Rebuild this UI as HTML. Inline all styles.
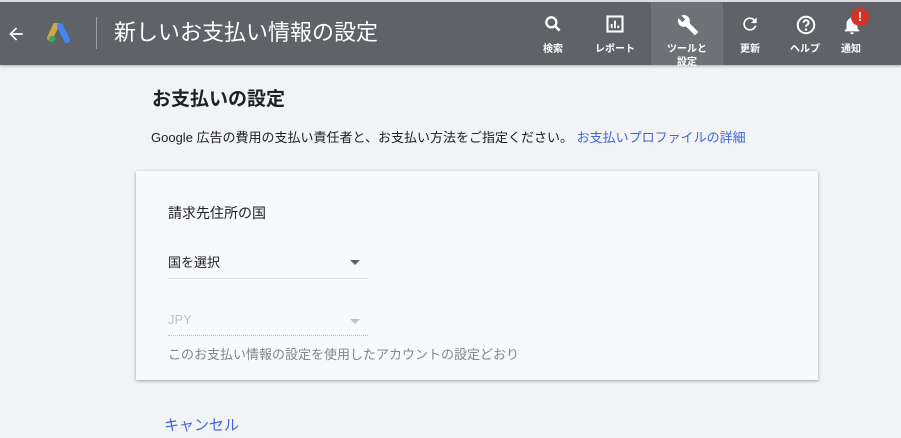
<!DOCTYPE html>
<html><head><meta charset="utf-8"><style>
*{margin:0;padding:0;box-sizing:border-box}
body{width:901px;height:438px;overflow:hidden;background:#f1f3f4;font-family:"Liberation Sans","Noto Sans CJK JP",sans-serif;position:relative}
.hdr{position:absolute;left:0;top:0;width:901px;height:65px;background:#5f6368;border-top:2px solid #dadce0;box-shadow:0 1px 3px rgba(0,0,0,.3)}
.ab{position:absolute;color:#fff}
.nav{position:absolute;top:0;height:63px;width:72px;text-align:center;color:#fff;font-size:10px;font-weight:bold}
.nav svg{position:absolute;left:26px;top:12px}
.nav span{position:absolute;left:0;right:0;top:41px;line-height:13px}
.abs{position:absolute}
</style></head><body>
<div class="hdr">
<svg class="abs" style="left:6px;top:22px" width="20" height="20" viewBox="0 0 24 24"><path d="M20 11H7.8l5.6-5.6L12 4l-8 8 8 8 1.4-1.4L7.8 13H20z" fill="#fff"/></svg>
<svg class="abs" style="left:47px;top:21px" width="25" height="22" viewBox="0 0 25 22"><path d="M9 2 L3 15" stroke="#f3b43f" stroke-width="6" stroke-linecap="round" opacity=".8"/><path d="M13 3 L20 17" stroke="#4285f4" stroke-width="6" stroke-linecap="round"/><circle cx="5" cy="16" r="3.3" fill="#34a853"/></svg>
<div class="abs" style="left:96px;top:15px;width:1px;height:32px;background:#9aa0a6"></div>
<div class="ab" style="left:114px;top:16px;font-size:22px;line-height:29px">新しいお支払い情報の設定</div>
<div class="nav" style="left:517px"><svg width="20" height="20" viewBox="0 0 24 24"><circle cx="10" cy="10" r="6" fill="none" stroke="#fff" stroke-width="2.8"/><path d="M14 14l6 6" stroke="#fff" stroke-width="3"/></svg><span>検索</span></div>
<div class="nav" style="left:579px"><svg width="20" height="20" viewBox="0 0 24 24"><rect x="3" y="3" width="18" height="18" fill="none" stroke="#fff" stroke-width="2.5"/><path d="M8 17v-5M12 17V8M16 17v-3" stroke="#fff" stroke-width="2.2"/></svg><span>レポート</span></div>
<div class="nav" style="left:651px;background:#6e7175;height:63px"><svg width="22" height="22" viewBox="0 0 24 24"><path d="M22.7 19l-9.1-9.1c.9-2.3.4-5-1.5-6.9-2-2-5-2.4-7.4-1.3L9 6 6 9 1.6 4.7C.4 7.1.9 10.1 2.9 12.1c1.9 1.9 4.6 2.4 6.9 1.5l9.1 9.1c.4.4 1 .4 1.4 0l2.3-2.3c.5-.4.5-1.100.1-1.4z" fill="#fff"/></svg><span>ツールと<br>設定</span></div>
<div class="nav" style="left:714px"><svg width="20" height="20" viewBox="0 0 24 24"><path d="M17.6 6.4A8 8 0 1 0 19.7 14h-2.1a6 6 0 1 1-1.4-6.2L13 11h7V4z" fill="#fff"/></svg><span>更新</span></div>
<div class="nav" style="left:769px"><svg width="22" height="22" viewBox="0 0 24 24"><circle cx="12" cy="12" r="9" fill="none" stroke="#fff" stroke-width="2.2"/><path d="M9.3 9.5a2.7 2.7 0 1 1 3.8 2.4c-.8.4-1.1 1-1.1 2" fill="none" stroke="#fff" stroke-width="2.2"/><circle cx="12" cy="17" r="1.3" fill="#fff"/></svg><span>ヘルプ</span></div>
<div class="nav" style="left:815px"><svg width="22" height="22" viewBox="0 0 24 24"><path d="M12 22a2 2 0 0 0 2-2h-4a2 2 0 0 0 2 2zm6-6v-5c0-3-1.6-5.6-4.5-6.3V4a1.5 1.5 0 0 0-3 0v.7C7.6 5.4 6 8 6 11v5l-2 2v1h16v-1z" fill="#fff"/></svg><span>通知</span>
<div class="abs" style="left:36px;top:6px;width:18px;height:18px;border-radius:50%;background:#d93025;color:#fff;font-size:13px;line-height:18px">!</div></div>
</div>
<div class="abs" style="left:152px;top:84px;font-size:19px;font-weight:bold;color:#202124">お支払いの設定</div>
<div class="abs" style="left:151px;top:127px;font-size:13px;color:#202124;white-space:nowrap">Google 広告の費用の支払い責任者と、お支払い方法をご指定ください。 <span style="color:#4165d8">お支払いプロファイルの詳細</span></div>
<div class="abs" style="left:136px;top:171px;width:682px;height:209px;background:#f8f9fa;box-shadow:0 1px 3px rgba(0,0,0,.35)">
<div class="abs" style="left:32px;top:32px;font-size:14px;color:#202124">請求先住所の国</div>
<div class="abs" style="left:32px;top:81px;font-size:13px;color:#202124">国を選択</div>
<div class="abs" style="left:214px;top:89px;border-left:5px solid transparent;border-right:5px solid transparent;border-top:5px solid #5f6368"></div>
<div class="abs" style="left:32px;top:107px;width:200px;height:1px;background:#dadce0"></div>
<div class="abs" style="left:32px;top:141px;font-size:13px;color:#bdc1c6">JPY</div>
<div class="abs" style="left:214px;top:148px;border-left:5px solid transparent;border-right:5px solid transparent;border-top:5px solid #bdc1c6"></div>
<div class="abs" style="left:32px;top:164px;width:200px;border-top:1px dotted #c0c4c8"></div>
<div class="abs" style="left:32px;top:173px;font-size:13px;color:#80868b;white-space:nowrap">このお支払い情報の設定を使用したアカウントの設定どおり</div>
</div>
<div class="abs" style="left:164px;top:414px;font-size:15px;color:#4165d8">キャンセル</div>
</body></html>
